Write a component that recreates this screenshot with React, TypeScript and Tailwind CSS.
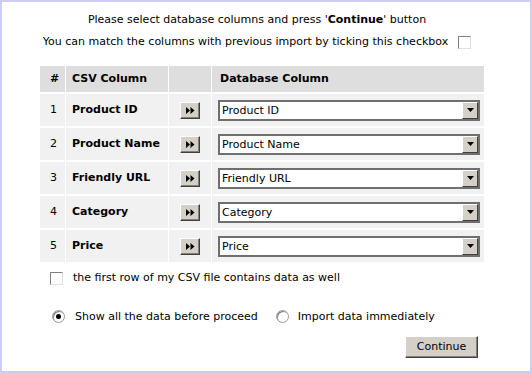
import React from "react";

const rows = ["Product ID", "Product Name", "Friendly URL", "Category", "Price"];

function ArrowBtn() {
  return (
    <div className="w-[20px] h-[17px] bg-[#d4d0c8] border border-t-white border-l-white border-r-[#404040] border-b-[#404040] shadow-[inset_-1px_-1px_0_#808080] flex items-center justify-center">
      <svg width="9" height="7" viewBox="0 0 9 7">
        <path d="M0 0 L4 3.5 L0 7 Z M4.5 0 L8.5 3.5 L4.5 7 Z" fill="#000" />
      </svg>
    </div>
  );
}

function FakeSelect({ value }: { value: string }) {
  return (
    <div className="w-[262px] h-[21px] bg-white border-2 border-[#6f6f6f] flex items-stretch">
      <div className="flex-1 flex items-center pl-[2px] text-black leading-none">{value}</div>
      <div className="w-[16px] bg-[#d4d0c8] border border-t-white border-l-white border-r-[#404040] border-b-[#404040] flex items-center justify-center">
        <svg width="7" height="4" viewBox="0 0 7 4">
          <path d="M0 0 H7 L3.5 4 Z" fill="#000" />
        </svg>
      </div>
    </div>
  );
}

function Radio({ checked }: { checked: boolean }) {
  return (
    <div className="w-[13px] h-[13px] rounded-full border border-[#9a9a9a] bg-white shadow-[inset_1px_1px_0_#808080] flex items-center justify-center">
      {checked && <div className="w-[5px] h-[5px] rounded-full bg-black" />}
    </div>
  );
}

export default function App() {
  return (
    <div
      className="w-[532px] h-[373px] bg-white border-2 border-[#cdcdf2] text-black"
      style={{ fontFamily: '"DejaVu Sans", Verdana, sans-serif', fontSize: "11px" }}
    >
      <div className="flex flex-col items-center pt-[10px] pr-[18px]">
        <div className="leading-[16px]">
          Please select database columns and press '<b>Continue</b>' button
        </div>
        <div className="flex items-center mt-[6px] leading-[16px]">
          <span>You can match the columns with previous import by ticking this checkbox</span>
          <div className="ml-[10px] w-[13px] h-[13px] border border-t-[#808080] border-l-[#808080] border-r-[#e0e0e0] border-b-[#e0e0e0] bg-white" />
        </div>
      </div>

      <div className="ml-[38px] mt-[16px] w-[444px] grid grid-cols-[25px_102px_42px_1fr] gap-[1px] bg-white">
        <div className="h-[26px] bg-[#dedede] font-bold flex items-center pl-[10px]">#</div>
        <div className="h-[26px] bg-[#dedede] font-bold flex items-center pl-[6px]">CSV Column</div>
        <div className="h-[26px] bg-[#dedede]" />
        <div className="h-[26px] bg-[#dedede] font-bold flex items-center pl-[8px]">Database Column</div>
        {rows.map((r, i) => (
          <React.Fragment key={r}>
            <div className="h-[32px] mt-[1px] bg-[#f1f1f1] flex items-center pl-[10px]">{i + 1}</div>
            <div className="h-[32px] mt-[1px] bg-[#f1f1f1] font-bold flex items-center pl-[6px]">{r}</div>
            <div className="h-[32px] mt-[1px] bg-[#f1f1f1] flex items-center pl-[11px]">
              <ArrowBtn />
            </div>
            <div className="h-[32px] mt-[1px] bg-[#f1f1f1] flex items-center pl-[6px]">
              <FakeSelect value={r} />
            </div>
          </React.Fragment>
        ))}
      </div>

      <div className="flex items-center ml-[48px] mt-[8px]">
        <div className="w-[13px] h-[13px] border border-t-[#808080] border-l-[#808080] border-r-[#e0e0e0] border-b-[#e0e0e0] bg-white" />
        <span className="ml-[10px]">the first row of my CSV file contains data as well</span>
      </div>

      <div className="flex items-center ml-[50px] mt-[22px]">
        <Radio checked />
        <span className="ml-[10px]">Show all the data before proceed</span>
        <div className="ml-[18px]">
          <Radio checked={false} />
        </div>
        <span className="ml-[9px]">Import data immediately</span>
      </div>

      <div className="flex justify-end pr-[52px] mt-[11px]">
        <div className="w-[73px] h-[22px] bg-[#d4d0c8] border border-t-white border-l-white border-r-[#404040] border-b-[#404040] shadow-[inset_-1px_-1px_0_#808080] flex items-center justify-center">
          Continue
        </div>
      </div>
    </div>
  );
}
